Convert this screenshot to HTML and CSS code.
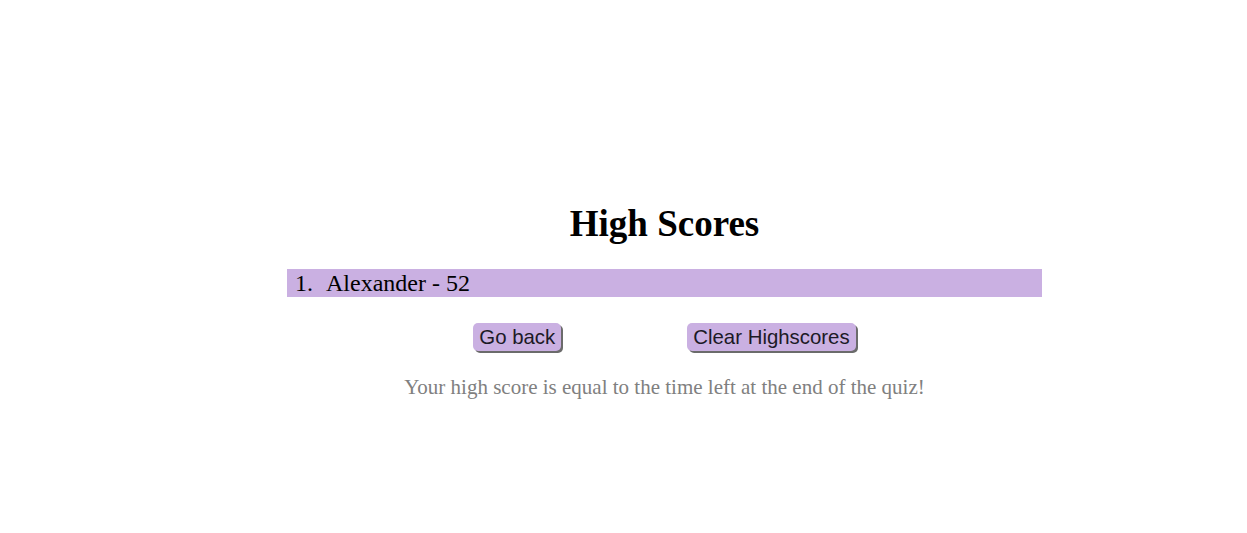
FILE: index.html
```html
<!DOCTYPE html>
<html>
<head>
<meta charset="utf-8">
<link rel="stylesheet" href="styles.css">
</head>
<body>
<main class="scores">
  <h1 class="title">High Scores</h1>
  <ol class="list">
    <li class="item">Alexander - 52</li>
  </ol>
  <div class="actions">
    <button class="btn">Go back</button>
    <button class="btn">Clear Highscores</button>
  </div>
  <p class="note">Your high score is equal to the time left at the end of the quiz!</p>
</main>
</body>
</html>
```
FILE: styles.css
```css
body {
  margin: 0;
  background: #fff;
  font-family: "Liberation Serif", "Times New Roman", serif;
}
.scores {
  width: 755px;
  margin-left: 287px;
  padding-top: 202px;
  display: flex;
  flex-direction: column;
  align-items: center;
}
.title {
  margin: 0;
  font-size: 37px;
  font-weight: bold;
  line-height: 44px;
}
.list {
  margin: 23px 0 0;
  padding: 0;
  list-style: none;
  width: 100%;
  counter-reset: n;
}
.item {
  background: #cab0e2;
  font-size: 24px;
  line-height: 28px;
  padding-left: 8px;
  counter-increment: n;
}
.item::before {
  content: counter(n) ".";
  display: inline-block;
  width: 31px;
}
.actions {
  margin-top: 26px;
  display: flex;
  gap: 126px;
}
.btn {
  font-family: "Liberation Sans", Arial, sans-serif;
  font-size: 20.4px;
  line-height: 28px;
  padding: 0 6px;
  background: #cab0e2;
  color: #1c1a26;
  border: none;
  border-radius: 5px;
  box-shadow: 2px 2px 0 #6b6b6b;
}
.note {
  margin: 23px 0 0;
  color: #808080;
  font-size: 21px;
  line-height: 26px;
}
```
